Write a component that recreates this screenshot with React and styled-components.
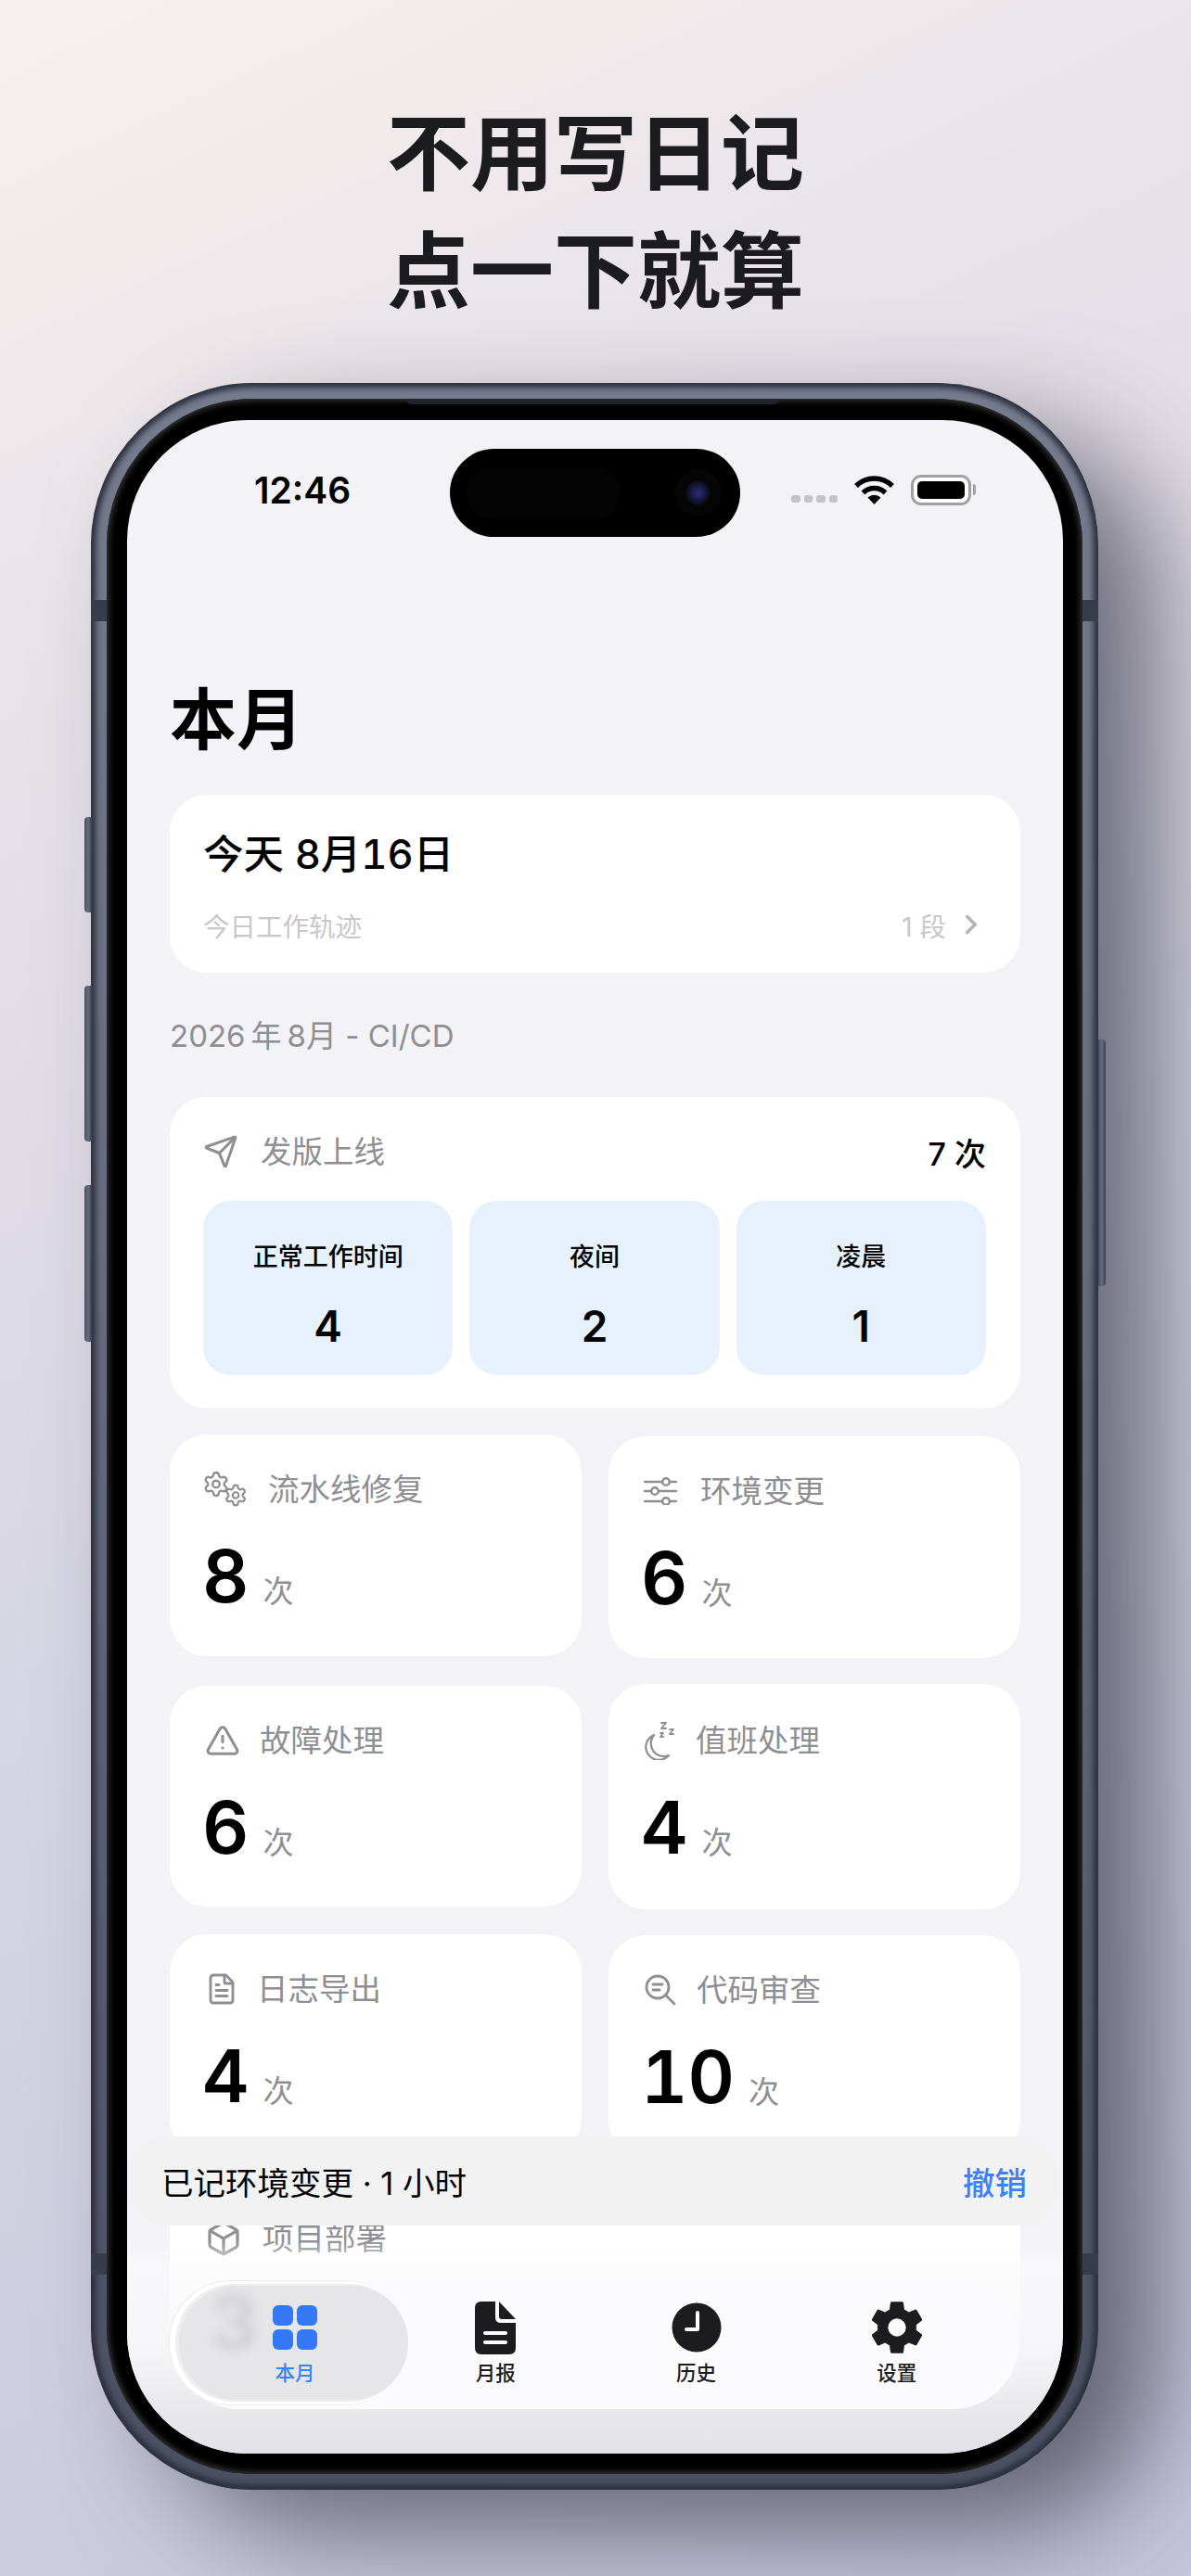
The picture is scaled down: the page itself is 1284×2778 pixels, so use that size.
import React from 'react';
import styled, { createGlobalStyle } from 'styled-components';
import { Send, Settings, TriangleAlert, FileText, Box, ChevronRight } from 'lucide-react';
import { IoSettingsSharp } from 'react-icons/io5';

const GlobalStyle = createGlobalStyle`
  html, body {
    margin: 0;
    padding: 0;
    overflow: hidden;
  }
  body {
    font-family: Inter, "Noto Sans CJK SC", sans-serif;
    -webkit-font-smoothing: antialiased;
  }
`;

const Page = styled.div`
  width: 1284px;
  height: 2778px;
  overflow: hidden;
  background: linear-gradient(155deg, #f8f0ee 0%, #e6e2e8 24%, #d6d5e3 55%, #c5c6dd 100%);
`;

const Headline = styled.h1`
  margin: 0;
  padding-top: 102px;
  text-align: center;
  font-size: 90px;
  line-height: 127px;
  font-weight: 700;
  color: #1c1c1e;
`;

const Phone = styled.div`
  position: relative;
  box-sizing: border-box;
  width: 1086px;
  height: 2272px;
  margin: 57px 0 0 98px;
  padding: 17px;
  border-radius: 175px;
  background: linear-gradient(180deg, #767c8e 0%, #626879 50%, #4a5062 100%);
  box-shadow: inset 0 0 6px 5px #2a2e3c, 70px 50px 120px -6px rgba(30, 30, 48, 0.6);
`;

const SideButton = styled.div`
  position: absolute;
  top: ${(p) => p.$top}px;
  height: ${(p) => p.$h}px;
  width: 8px;
  ${(p) => (p.$right ? 'right: -8px;' : 'left: -7px;')}
  border-radius: ${(p) => (p.$right ? '0 4px 4px 0' : '4px 0 0 4px')};
  background: linear-gradient(90deg, #4a5062, #666d80 50%, #3a3f4f);
`;

const AntennaBand = styled.div`
  position: absolute;
  top: ${(p) => p.$top}px;
  height: 23px;
  width: 17px;
  ${(p) => (p.$right ? 'right: 0;' : 'left: 0;')}
  background: #373c4b;
`;

const Speaker = styled.div`
  position: absolute;
  top: 17px;
  left: 340px;
  width: 402px;
  height: 6px;
  border-radius: 0 0 8px 8px;
  background: #20232e;
`;

const Bezel = styled.div`
  box-sizing: border-box;
  height: 100%;
  padding: 23px 21px 22px 22px;
  border-radius: 158px;
  background: #000;
  box-shadow: inset 0 0 7px 2px #3c3c3c;
`;

const Screen = styled.div`
  position: relative;
  height: 100%;
  overflow: hidden;
  border-radius: 130px;
  background: #f2f2f7;
`;

const Island = styled.div`
  position: absolute;
  top: 31px;
  left: 348px;
  width: 313px;
  height: 95px;
  border-radius: 48px;
  background: #000;
  display: flex;
  align-items: center;
  padding-left: 18px;
  box-sizing: border-box;
`;

const IslandGlass = styled.div`
  width: 165px;
  height: 57px;
  border-radius: 26px;
  background: #040404;
`;

const Lens = styled.div`
  position: absolute;
  left: 254px;
  top: 34px;
  width: 27px;
  height: 27px;
  border-radius: 50%;
  background: radial-gradient(circle at 50% 50%, #2a2f78 0%, #1a1c48 35%, #0c0c1a 65%, #050507 100%);
  box-shadow: 0 0 0 12px #050506;
`;

const StatusBar = styled.div`
  display: flex;
  align-items: center;
  justify-content: space-between;
  height: 50px;
  margin-top: 50px;
  padding: 0 99px 0 137px;
`;

const Time = styled.div`
  font-size: 39px;
  font-weight: 600;
  color: #000;
`;

const StatusIcons = styled.div`
  display: flex;
  align-items: center;
`;

const SignalDots = styled.div`
  display: flex;
  gap: 4px;
  margin-top: 20px;
  margin-right: 17px;
`;

const SignalDot = styled.span`
  width: 9.5px;
  height: 8px;
  border-radius: 3px;
  background: #c4c4c8;
`;

const Battery = styled.div`
  position: relative;
  box-sizing: border-box;
  width: 65px;
  height: 33px;
  margin-left: 17px;
  padding: 4px;
  border: 3px solid #a0a0a4;
  border-radius: 11px;
  background: #fff;

  &::after {
    content: '';
    position: absolute;
    right: -8px;
    top: 7px;
    width: 3px;
    height: 12px;
    border-radius: 0 3px 3px 0;
    background: #a0a0a4;
  }
`;

const BatteryLevel = styled.div`
  height: 100%;
  border-radius: 5px;
  background: #000;
`;

const Content = styled.div`
  padding: 0 46px;
`;

const Title = styled.h2`
  margin: 183px 0 41px;
  font-size: 72px;
  line-height: 80px;
  font-weight: 700;
  color: #000;
`;

const Card = styled.div`
  background: #fff;
  border-radius: 40px;
`;

const TodayCard = styled(Card)`
  box-sizing: border-box;
  height: 192px;
  padding: 36px 36px 0;
`;

const TodayTitle = styled.div`
  font-size: 43.5px;
  line-height: 56px;
  font-weight: 500;
  font-variant-numeric: tabular-nums;
  color: #000;
`;

const TodayRow = styled.div`
  display: flex;
  align-items: center;
  justify-content: space-between;
  height: 40px;
  margin-top: 28px;
  font-size: 28.5px;
  color: #c7c7cc;
`;

const TodayMeta = styled.div`
  display: flex;
  align-items: center;
  gap: 10px;
`;

const SectionLabel = styled.div`
  margin: 46px 0 44px;
  font-size: 33px;
  line-height: 44px;
  color: #8e8e93;
`;

const ReleaseCard = styled(Card)`
  padding: 36px 37px 36px 36px;
`;

const ReleaseHead = styled.div`
  display: flex;
  align-items: center;
  justify-content: space-between;
  height: 46px;
  margin-bottom: 30px;
`;

const Label = styled.div`
  display: flex;
  align-items: center;
  gap: ${(p) => p.$gap || 24}px;
  font-size: 33.5px;
  line-height: 46px;
  color: #8e8e93;
`;

const ReleaseTotal = styled.div`
  font-size: 34px;
  font-weight: 500;
  color: #000;
`;

const TileRow = styled.div`
  display: grid;
  grid-template-columns: repeat(3, 1fr);
  gap: 18px;
`;

const Tile = styled.div`
  box-sizing: border-box;
  height: 188px;
  padding-top: 43px;
  border-radius: 30px;
  background: #e6f1fc;
  text-align: center;
  color: #000;
`;

const TileLabel = styled.div`
  font-size: 27px;
  line-height: 36px;
  font-weight: 500;
`;

const TileValue = styled.div`
  margin-top: 28px;
  font-size: 46px;
  line-height: 56px;
  font-weight: 600;
`;

const StatColumns = styled.div`
  display: grid;
  grid-template-columns: 444px 444px;
  gap: 29px;
`;

const StatColumn = styled.div`
  display: flex;
  flex-direction: column;
`;

const StatCard = styled(Card)`
  box-sizing: border-box;
  height: ${(p) => p.$h || 239}px;
  margin-top: ${(p) => p.$top}px;
  padding: ${(p) => p.$pad || 41}px 38px 0;
`;

const HeadSlot = styled.div`
  display: flex;
  align-items: center;
  height: 36px;
`;

const Count = styled.div`
  display: flex;
  align-items: baseline;
  gap: 15px;
  margin: 37px 0 0 -3px;
  line-height: 78px;
`;

const CountValue = styled.span`
  font-size: 78px;
  font-weight: 600;
  font-variant-numeric: tabular-nums;
  color: #000;
`;

const CountUnit = styled.span`
  font-size: 33px;
  color: #8e8e93;
`;

const WideCard = styled(Card)`
  height: 239px;
  margin-top: 29px;
  padding: 36px 38px 0;
`;

const BottomFade = styled.div`
  position: absolute;
  left: 0;
  right: 0;
  bottom: 0;
  height: 262px;
  background: linear-gradient(
    180deg,
    rgba(252, 252, 253, 0) 0%,
    rgba(252, 252, 253, 0) 12%,
    rgba(251, 251, 252, 0.65) 22%,
    rgba(246, 246, 248, 0.9) 56%,
    #e8e8ec 84%,
    #e2e2e6 100%
  );
`;

const Toast = styled.div`
  position: absolute;
  left: 4px;
  right: 5px;
  bottom: 246px;
  height: 96px;
  box-sizing: border-box;
  padding: 0 34px 0 33px;
  display: flex;
  align-items: center;
  justify-content: space-between;
  border-radius: 40px;
  background: #f2f2f3;
  font-size: 34.5px;
  color: #000;
`;

const Undo = styled.span`
  color: #3b82f6;
  font-weight: 500;
`;

const TabBar = styled.div`
  position: absolute;
  left: 50px;
  right: 48px;
  bottom: 48px;
  height: 142px;
  box-sizing: border-box;
  padding: 0 23px;
  display: grid;
  grid-template-columns: repeat(4, 1fr);
  border-radius: 72px;
  background: #fbfbfd;
`;

const Tab = styled.div`
  position: relative;
  display: flex;
  flex-direction: column;
  align-items: center;
  justify-content: center;
  gap: 6px;
  color: ${(p) => (p.$active ? '#3b82f6' : '#1c1c1e')};

  ${(p) =>
    p.$active &&
    `&::before {
      content: '';
      position: absolute;
      top: 9px;
      bottom: 10px;
      left: -17px;
      right: -14px;
      border-radius: 62px;
      background: #e6e6e8;
      box-shadow: -2px 0 0 2px #eeeef1, -5px 0 0 5px #fff, -6px 0 0 6px #f0f0f3;
    }`}
`;

const Ghost = styled.span`
  position: absolute;
  left: 18px;
  top: 10px;
  font-size: 78px;
  line-height: 78px;
  font-weight: 600;
  color: #cdcdd0;
  filter: blur(6px);
`;

const TabIcon = styled.div`
  position: relative;
  display: flex;
  align-items: center;
  justify-content: center;
  height: 58px;
`;

const TabLabel = styled.div`
  position: relative;
  font-size: 21.5px;
  line-height: 28px;
  font-weight: 500;
`;

const GearPair = styled.div`
  display: flex;
  width: 46px;
  height: 36px;
  color: #8e8e93;

  & > svg:first-child {
    margin: -3px 0 0 -3px;
  }

  & > svg:last-child {
    align-self: flex-end;
    margin: 0 0 -2px -7px;
  }
`;

const WifiIcon = () => (
  <svg width="45" height="33" viewBox="0 0 45 33">
    <path d="M3 12 A28 28 0 0 1 42 12" fill="none" stroke="#000" strokeWidth="5.5" />
    <path d="M10.500 19.500 A17 17 0 0 1 34.500 19.500" fill="none" stroke="#000" strokeWidth="5.500" />
    <path d="M15.500 24.500 A10 10 0 0 1 29.500 24.500 L22.500 32 Z" fill="#000" />
  </svg>
);

const MoonZzz = () => (
  <svg width="36" height="42" viewBox="0 0 36 42" fill="none" stroke="#8e8e93" strokeWidth="2.200" strokeLinecap="round" strokeLinejoin="round">
    <path d="M11 15 A14 14 0 1 0 27 37 A14 14 0 0 1 11 15 Z" />
    <path d="M19 2h5l-5 6h5M28 9h4l-4 5h4M18 13h3l-3 4h3" strokeWidth="1.800" />
  </svg>
);

const ReviewIcon = () => (
  <svg width="36" height="34" viewBox="0 0 36 34" fill="none" stroke="#8e8e93" strokeWidth="2.800" strokeLinecap="round">
    <circle cx="15" cy="14" r="12" />
    <path d="M24 23l9 9M10 11h10M10 17h7" />
  </svg>
);

const SlidersIcon = () => (
  <svg width="36" height="30" viewBox="0 0 36 30" stroke="#8e8e93" strokeWidth="2.500" strokeLinecap="round">
    <path d="M1 5h34M1 15h34M1 26h34" />
    <circle cx="24" cy="5" r="3.800" fill="#fff" />
    <circle cx="12" cy="15" r="3.800" fill="#fff" />
    <circle cx="24" cy="26" r="3.800" fill="#fff" />
  </svg>
);

const GridIcon = () => (
  <svg width="48" height="48" viewBox="0 0 48 48" fill="#3478f6">
    <rect x="0" y="0" width="22" height="22" rx="6" />
    <rect x="26" y="0" width="22" height="22" rx="6" />
    <rect x="0" y="26" width="22" height="22" rx="6" />
    <rect x="26" y="26" width="22" height="22" rx="6" />
  </svg>
);

const ReportIcon = () => (
  <svg width="44" height="57" viewBox="0 0 44 57">
    <path d="M7 0H22V17Q22 23 28 23H44V50Q44 57 37 57H7Q0 57 0 50V7Q0 0 7 0Z" fill="#1c1c1e" />
    <path d="M26 0L44 19H29Q26 19 26 16Z" fill="#1c1c1e" />
    <path d="M11 34H33M11 44H33" stroke="#fbfbfd" strokeWidth="4" strokeLinecap="round" />
  </svg>
);

const ClockIcon = () => (
  <svg width="54" height="54" viewBox="0 0 54 54">
    <circle cx="27" cy="27" r="26.500" fill="#1c1c1e" />
    <path d="M28 11V29H16" fill="none" stroke="#fbfbfd" strokeWidth="4" strokeLinecap="round" strokeLinejoin="round" />
  </svg>
);

const stats = {
  left: [
    { top: 28, h: 239, label: '流水线修复', gap: 22, icon: 'gears', value: 8 },
    { top: 32, h: 238, label: '故障处理', gap: 21, icon: 'alert', value: 6 },
    { top: 30, h: 239, label: '日志导出', gap: 20, icon: 'file', value: 4 },
  ],
  right: [
    { top: 30, h: 239, label: '环境变更', gap: 25, icon: 'sliders', value: 6 },
    { top: 28, h: 243, label: '值班处理', gap: 20, icon: 'moon', value: 4, pad: 43 },
    { top: 28, h: 239, label: '代码审查', gap: 21, icon: 'review', value: 10 },
  ],
};

const statIcons = {
  gears: (
    <GearPair>
      <Settings size={31} strokeWidth={1.9} />
      <Settings size={27} strokeWidth={2} />
    </GearPair>
  ),
  alert: <TriangleAlert size={38} strokeWidth={1.9} />,
  file: <FileText size={36} strokeWidth={1.9} />,
  sliders: <SlidersIcon />,
  moon: <MoonZzz />,
  review: <ReviewIcon />,
};

const StatItem = ({ item }) => (
  <StatCard $top={item.top} $h={item.h} $pad={item.pad}>
    <HeadSlot>
      <Label $gap={item.gap}>
        {statIcons[item.icon]}
        {item.label}
      </Label>
    </HeadSlot>
    <Count>
      <CountValue>{item.value}</CountValue>
      <CountUnit>次</CountUnit>
    </Count>
  </StatCard>
);

const App = () => (
  <Page>
    <GlobalStyle />
    <Headline>
      不用写日记
      <br />
      点一下就算
    </Headline>
    <Phone>
      <SideButton $top={468} $h={103} />
      <SideButton $top={650} $h={168} />
      <SideButton $top={865} $h={169} />
      <SideButton $right $top={708} $h={266} />
      <AntennaBand $top={234} />
      <AntennaBand $right $top={234} />
      <AntennaBand $top={2017} />
      <AntennaBand $right $top={2017} />
      <Speaker />
      <Bezel>
        <Screen>
          <Island>
            <IslandGlass />
            <Lens />
          </Island>
          <StatusBar>
            <Time>12:46</Time>
            <StatusIcons>
              <SignalDots>
                <SignalDot />
                <SignalDot />
                <SignalDot />
                <SignalDot />
              </SignalDots>
              <WifiIcon />
              <Battery>
                <BatteryLevel />
              </Battery>
            </StatusIcons>
          </StatusBar>
          <Content>
            <Title>本月</Title>
            <TodayCard>
              <TodayTitle>今天 8月16日</TodayTitle>
              <TodayRow>
                今日工作轨迹
                <TodayMeta>
                  1 段
                  <ChevronRight size={34} strokeWidth={2.6} color="#b5b5ba" />
                </TodayMeta>
              </TodayRow>
            </TodayCard>
            <SectionLabel>2026{'\u2009'}年{'\u2009'}8月 - CI/CD</SectionLabel>
            <ReleaseCard>
              <ReleaseHead>
                <Label>
                  <Send size={38} strokeWidth={1.9} />
                  发版上线
                </Label>
                <ReleaseTotal>7 次</ReleaseTotal>
              </ReleaseHead>
              <TileRow>
                <Tile>
                  <TileLabel>正常工作时间</TileLabel>
                  <TileValue>4</TileValue>
                </Tile>
                <Tile>
                  <TileLabel>夜间</TileLabel>
                  <TileValue>2</TileValue>
                </Tile>
                <Tile>
                  <TileLabel>凌晨</TileLabel>
                  <TileValue>1</TileValue>
                </Tile>
              </TileRow>
            </ReleaseCard>
            <StatColumns>
              <StatColumn>
                {stats.left.map((item) => (
                  <StatItem key={item.label} item={item} />
                ))}
              </StatColumn>
              <StatColumn>
                {stats.right.map((item) => (
                  <StatItem key={item.label} item={item} />
                ))}
              </StatColumn>
            </StatColumns>
            <WideCard>
              <Label $gap={22}>
                <Box size={40} strokeWidth={1.9} />
                项目部署
              </Label>
            </WideCard>
          </Content>
          <BottomFade />
          <Toast>
            <span>已记环境变更 · 1 小时</span>
            <Undo>撤销</Undo>
          </Toast>
          <TabBar>
            <Tab $active>
              <Ghost aria-hidden="true">3</Ghost>
              <TabIcon>
                <GridIcon />
              </TabIcon>
              <TabLabel>本月</TabLabel>
            </Tab>
            <Tab>
              <TabIcon>
                <ReportIcon />
              </TabIcon>
              <TabLabel>月报</TabLabel>
            </Tab>
            <Tab>
              <TabIcon>
                <ClockIcon />
              </TabIcon>
              <TabLabel>历史</TabLabel>
            </Tab>
            <Tab>
              <TabIcon>
                <IoSettingsSharp size={62} />
              </TabIcon>
              <TabLabel>设置</TabLabel>
            </Tab>
          </TabBar>
        </Screen>
      </Bezel>
    </Phone>
  </Page>
);

export default App;
